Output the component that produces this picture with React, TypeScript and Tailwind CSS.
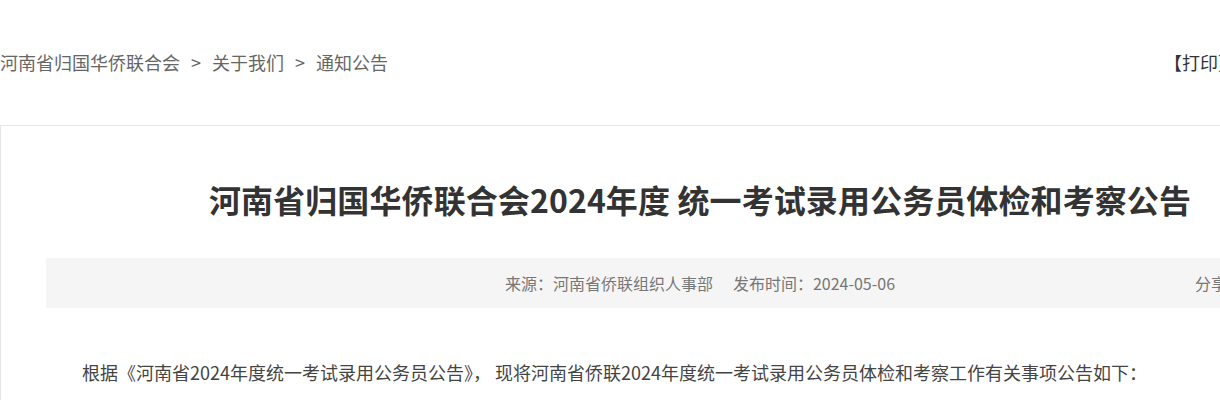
export default function App() {
  const font = { fontFamily: '"Noto Sans CJK SC", "Noto Sans", sans-serif' }

  return (
    <div className="w-[1220px] h-[400px] overflow-hidden bg-white" style={font}>
      <div className="w-[1400px]">
        {/* Breadcrumb */}
        <div className="flex h-[125px] items-center justify-between text-[18px]">
          <div className="flex items-center text-[#666]">
            <span>河南省归国华侨联合会</span>
            <span className="px-[11px]">&gt;</span>
            <span>关于我们</span>
            <span className="px-[11px]">&gt;</span>
            <span>通知公告</span>
          </div>
          <div className="w-[236px] text-[#333]">【打印】</div>
        </div>

        {/* Article */}
        <div className="border border-[#e6e6e6] px-[45px]">
          <h1 className="pt-[49px] text-center text-[32px] font-bold leading-[48px] tracking-[0.1px] text-[#333]">
            河南省归国华侨联合会2024年度 统一考试录用公务员体检和考察公告
          </h1>

          <div className="mt-[35px] grid h-[50px] grid-cols-[1fr_auto_1fr] items-center bg-[#f5f5f5] text-[16px] text-[#777]">
            <div />
            <div className="flex items-center">
              <span>来源：河南省侨联组织人事部</span>
              <span className="ml-[20px]">发布时间：2024-05-06</span>
            </div>
            <div className="flex justify-end">
              <div className="w-[159px]">分享到：</div>
            </div>
          </div>

          <div className="mt-[49px] indent-[36px] text-[18px] leading-[30px] text-[#444]">
            根据《河南省2024年度统一考试录用公务员公告》， 现将河南省侨联2024年度统一考试录用公务员体检和考察工作有关事项公告如下：
          </div>
          <div className="h-[40px]" />
        </div>
      </div>
    </div>
  )
}
